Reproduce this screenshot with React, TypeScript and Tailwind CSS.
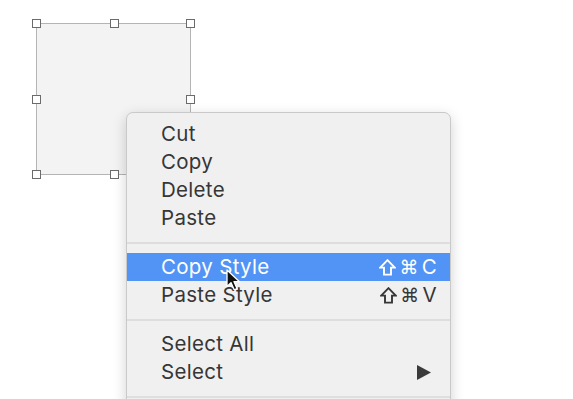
import React from 'react'

type Item = { label: string; key?: string; submenu?: boolean; active?: boolean }

const groups: Item[][] = [
  [{ label: 'Cut' }, { label: 'Copy' }, { label: 'Delete' }, { label: 'Paste' }],
  [
    { label: 'Copy Style', key: 'C', active: true },
    { label: 'Paste Style', key: 'V' },
  ],
  [{ label: 'Select All' }, { label: 'Select', submenu: true }],
  [],
]

function Handle({ className }: { className: string }) {
  return <div className={`absolute h-[9px] w-[9px] border border-[#6b6b6b] bg-white ${className}`} />
}

function ShiftIcon() {
  return (
    <svg width="17" height="17" viewBox="0 0 17 17">
      <path
        d="M8.5 1.2 L1.2 8.6 L5 8.6 L5 15.6 L12 15.6 L12 8.6 L15.8 8.6 Z"
        fill="none"
        stroke="currentColor"
        strokeWidth="1.9"
        strokeLinejoin="miter"
      />
    </svg>
  )
}

function Cursor() {
  return (
    <svg className="absolute left-[226px] top-[269px]" width="17" height="23" viewBox="0 0 17 23">
      <path
        d="M1 1 L1 17.5 L5 13.6 L8.2 20.8 L11 19.6 L8 12.7 L13.5 12.7 Z"
        fill="#111"
        stroke="#fff"
        strokeWidth="1.3"
        strokeLinejoin="round"
      />
    </svg>
  )
}

export default function App() {
  return (
    <div
      className="relative h-[399px] w-[573px] overflow-hidden bg-white"
      style={{ fontFamily: 'Inter, "Liberation Sans", sans-serif' }}
    >
      {/* selected shape */}
      <div className="absolute left-[36px] top-[23px] h-[152px] w-[155px] border border-[#b4b4b4] bg-[#f3f3f3]">
        <Handle className="-left-[5px] -top-[5px]" />
        <Handle className="left-[73px] -top-[5px]" />
        <Handle className="-right-[5px] -top-[5px]" />
        <Handle className="-left-[5px] top-[71px]" />
        <Handle className="-right-[5px] top-[71px]" />
        <Handle className="-left-[5px] -bottom-[5px]" />
        <Handle className="left-[73px] -bottom-[5px]" />
      </div>

      {/* context menu */}
      <div className="absolute left-[126px] top-[112px] w-[325px] rounded-[7px] border border-[#c9c9c9] bg-[#f0f0f0] pt-[7px] shadow-[0_4px_14px_rgba(0,0,0,0.18)]">
        {groups.map((group, gi) => (
          <div key={gi}>
            {gi > 0 && (
              <div className="flex h-[21px] items-center">
                <div className="h-[2px] w-full bg-[#dedede]" />
              </div>
            )}
            {group.map((item) => (
              <div
                key={item.label}
                className={`flex h-[28px] items-center justify-between pl-[34px] pr-[13px] text-[20.5px] tracking-[0.3px] ${
                  item.active ? 'bg-[#5294f5] text-white' : 'text-[#363636]'
                }`}
              >
                <span>{item.label}</span>
                {item.key && (
                  <span className="flex items-center gap-[3px]">
                    <ShiftIcon />
                    <span className="text-[19px]" style={{ fontFamily: '"DejaVu Sans", sans-serif' }}>
                      ⌘
                    </span>
                    <span>{item.key}</span>
                  </span>
                )}
                {item.submenu && (
                  <svg width="14" height="15" viewBox="0 0 14 15" className="mr-[6px]">
                    <path d="M0 0 L14 7.5 L0 15 Z" fill="#3a3a3a" />
                  </svg>
                )}
              </div>
            ))}
          </div>
        ))}
        <div className="h-[30px]" />
      </div>

      <Cursor />
    </div>
  )
}
